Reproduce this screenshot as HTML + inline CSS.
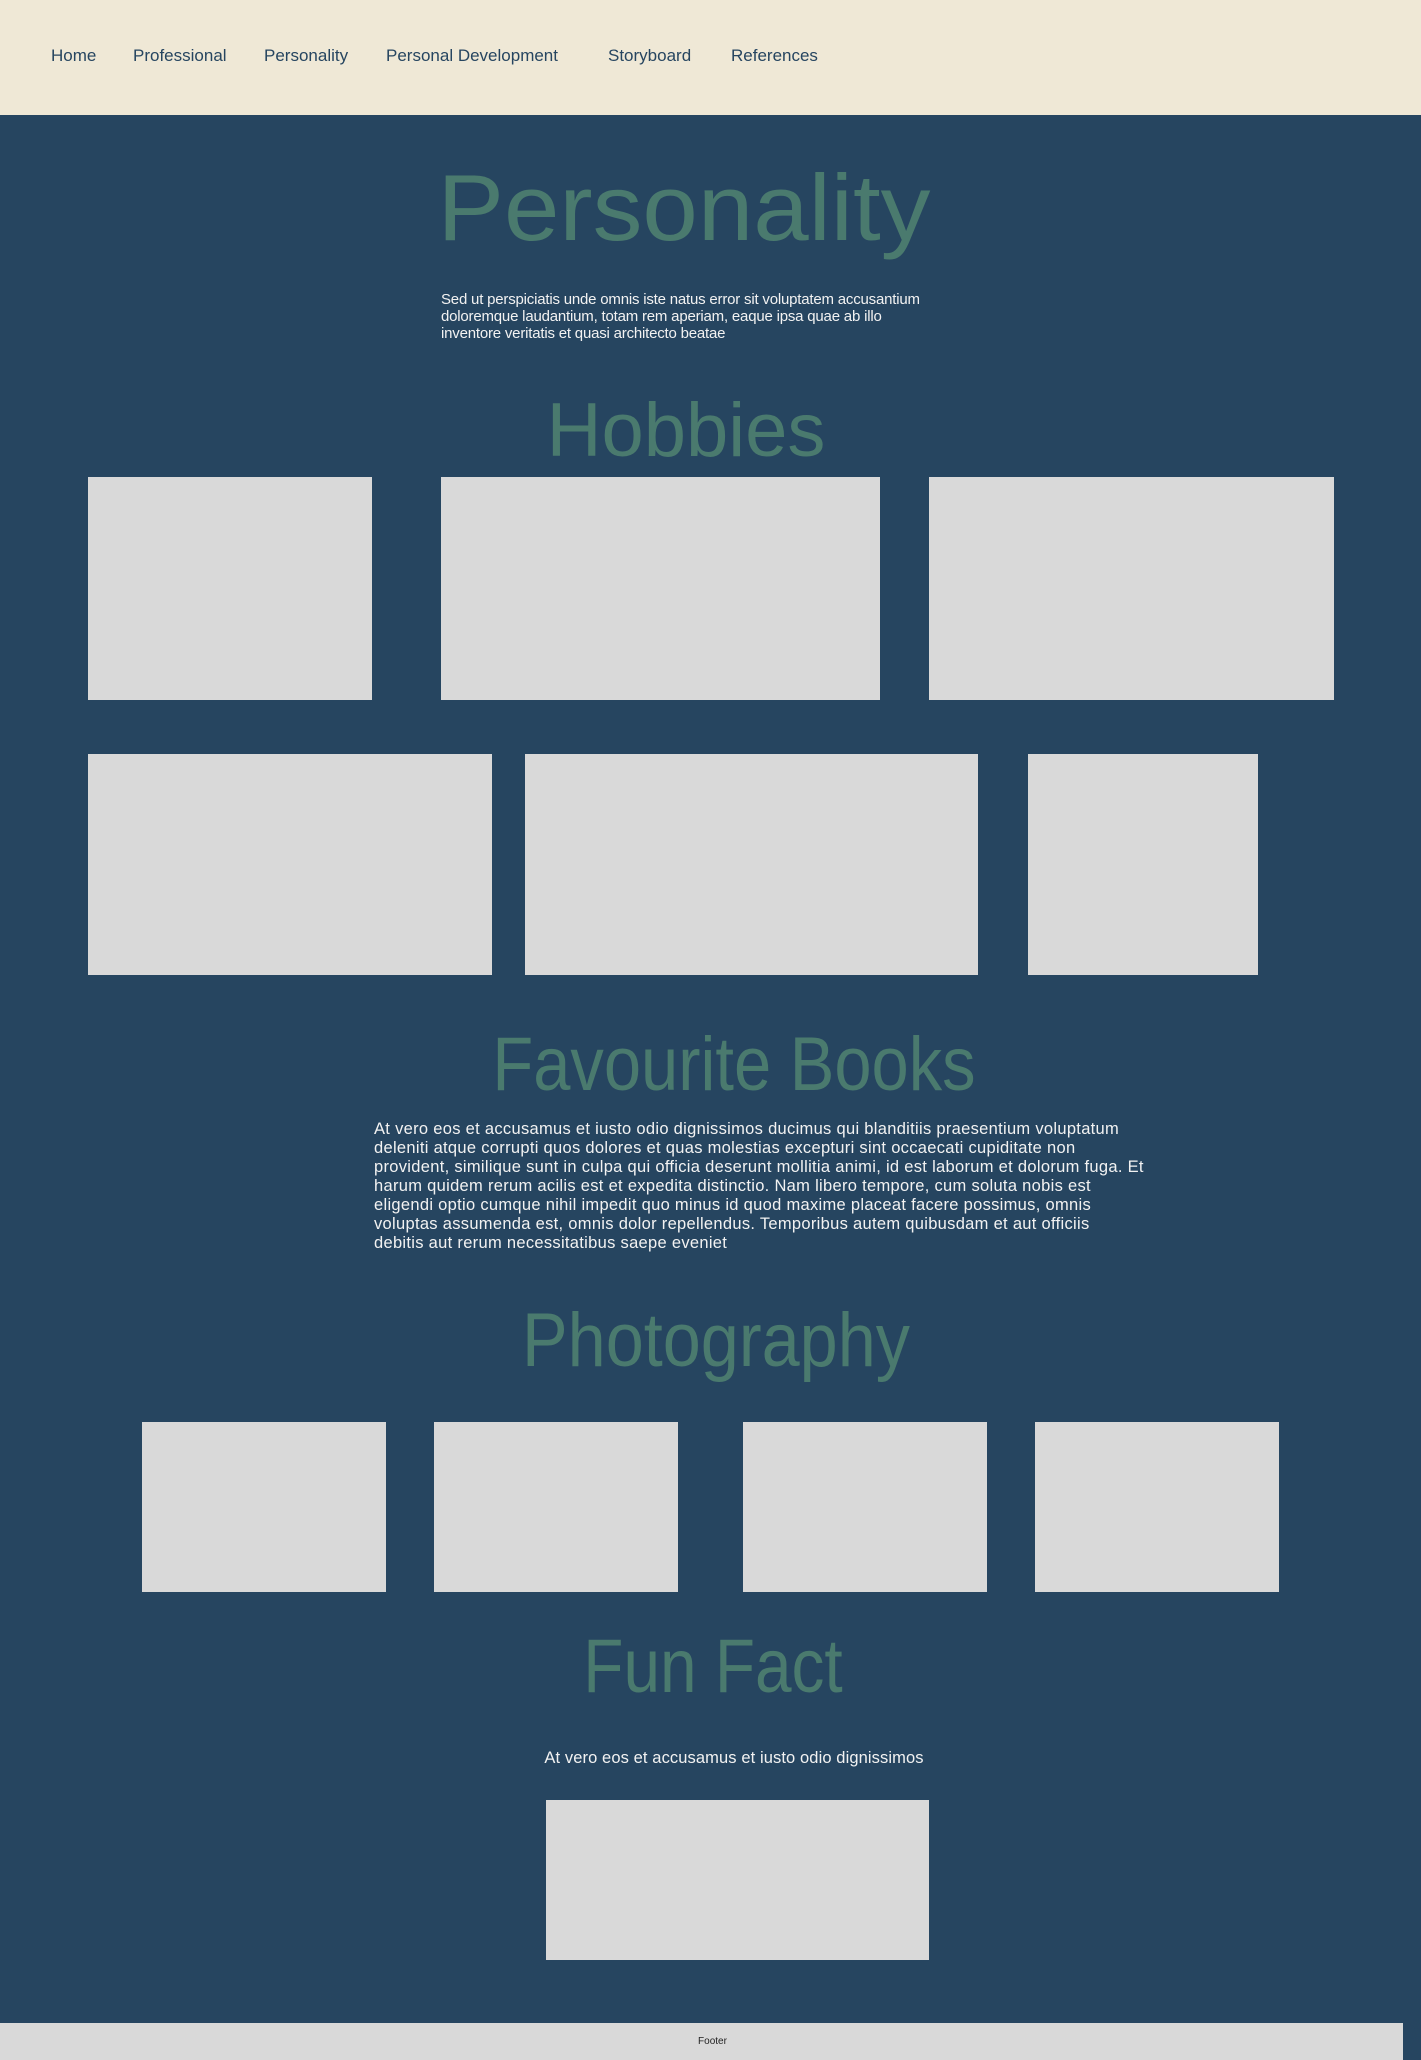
<!DOCTYPE html>
<html><head><meta charset="utf-8"><style>
*{margin:0;padding:0;box-sizing:border-box}
body{width:1421px;height:2060px;background:#264560;font-family:"Liberation Sans",sans-serif;position:relative;overflow:hidden}
.nav{position:absolute;left:0;top:0;width:1421px;height:115px;background:#efe8d6}
.nav span{position:absolute;top:46px;font-size:17px;color:#264560}
.h{position:absolute;width:1000px;text-align:center;color:#4a7a6e;font-weight:normal;white-space:nowrap}
.b{position:absolute;background:#d9d9d9}
.p{position:absolute;color:#f2f2f2;white-space:nowrap}
</style></head><body>
<div class="nav">
<span style="left:51px">Home</span>
<span style="left:133px">Professional</span>
<span style="left:264px">Personality</span>
<span style="left:386px">Personal Development</span>
<span style="left:608px">Storyboard</span>
<span style="left:731px">References</span>
</div>
<div class="h" style="left:184px;top:154px;font-size:94px;transform:scaleX(1.06)">Personality</div>
<div class="p" style="left:441px;top:291px;font-size:15px;line-height:17px;letter-spacing:-0.2px">Sed ut perspiciatis unde omnis iste natus error sit voluptatem accusantium<br>doloremque laudantium, totam rem aperiam, eaque ipsa quae ab illo<br>inventore veritatis et quasi architecto beatae</div>
<div class="h" style="left:186px;top:387px;font-size:76px">Hobbies</div>
<div class="b" style="left:88px;top:477px;width:284px;height:223px"></div>
<div class="b" style="left:441px;top:477px;width:439px;height:223px"></div>
<div class="b" style="left:929px;top:477px;width:405px;height:223px"></div>
<div class="b" style="left:88px;top:754px;width:404px;height:221px"></div>
<div class="b" style="left:525px;top:754px;width:453px;height:221px"></div>
<div class="b" style="left:1028px;top:754px;width:230px;height:221px"></div>
<div class="h" style="left:234px;top:1021px;font-size:76px;transform:scaleX(0.88)">Favourite Books</div>
<div class="p" style="left:374px;top:1120px;font-size:16.5px;line-height:19px;letter-spacing:0.3px">At vero eos et accusamus et iusto odio dignissimos ducimus qui blanditiis praesentium voluptatum<br>deleniti atque corrupti quos dolores et quas molestias excepturi sint occaecati cupiditate non<br>provident, similique sunt in culpa qui officia deserunt mollitia animi, id est laborum et dolorum fuga. Et<br>harum quidem rerum acilis est et expedita distinctio. Nam libero tempore, cum soluta nobis est<br>eligendi optio cumque nihil impedit quo minus id quod maxime placeat facere possimus, omnis<br>voluptas assumenda est, omnis dolor repellendus. Temporibus autem quibusdam et aut officiis<br>debitis aut rerum necessitatibus saepe eveniet</div>
<div class="h" style="left:216px;top:1297px;font-size:76px;transform:scaleX(0.9)">Photography</div>
<div class="b" style="left:142px;top:1422px;width:244px;height:170px"></div>
<div class="b" style="left:434px;top:1422px;width:244px;height:170px"></div>
<div class="b" style="left:743px;top:1422px;width:244px;height:170px"></div>
<div class="b" style="left:1035px;top:1422px;width:244px;height:170px"></div>
<div class="h" style="left:213px;top:1623px;font-size:76px;transform:scaleX(0.865)">Fun Fact</div>
<div class="p" style="left:0;width:1421px;text-align:center;top:1749px;font-size:16.5px;padding-left:47px;letter-spacing:0.1px">At vero eos et accusamus et iusto odio dignissimos</div>
<div class="b" style="left:546px;top:1800px;width:383px;height:160px"></div>
<div class="b" style="left:0;top:2023px;width:1403px;height:37px"></div>
<div style="position:absolute;left:0;width:1403px;top:2036px;text-align:center;font-size:10px;color:#222;padding-left:22px">Footer</div>
</body></html>
